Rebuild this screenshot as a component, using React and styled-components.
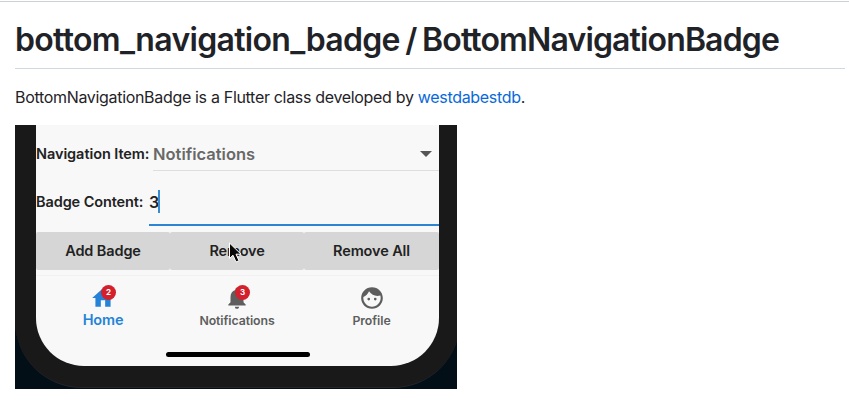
import React from "react";
import styled, { createGlobalStyle } from "styled-components";
import { MdFace, MdHome, MdNotifications } from "react-icons/md";

const GlobalStyle = createGlobalStyle`
  * { box-sizing: border-box; }
  body {
    margin: 0;
    background: #fff;
    color: #1f2328;
    font-family: Inter, "Liberation Sans", sans-serif;
  }
`;

const Page = styled.main`
  height: 413px;
  overflow: hidden;
  margin-top: 1px;
  border-top: 1px solid #cdd1d6;
  padding: 14px 4px 0 15px;
`;

const Title = styled.h1`
  margin: 0;
  height: 53px;
  padding-top: 4px;
  border-bottom: 1px solid #d1d9e0;
  font-size: 32px;
  line-height: 40px;
  font-weight: 600;
  letter-spacing: -0.68px;
  word-spacing: -2px;
  white-space: nowrap;
`;

const ClassName = styled.span`
  letter-spacing: -0.86px;
`;

const Intro = styled.p`
  margin: 16px 0 0;
  height: 40px;
  font-size: 16px;
  line-height: 24px;
  letter-spacing: -0.32px;
  white-space: nowrap;
`;

const Link = styled.a`
  color: #0969da;
  text-decoration: none;
`;

const Preview = styled.section`
  width: 442px;
  height: 264px;
  overflow: hidden;
  background: #020f17;
`;

const Device = styled.div`
  width: 445px;
  height: 263px;
  padding: 0 21px;
  background: #191919;
  border-bottom: 1px solid #25252b;
  border-radius: 0 0 67px 67px;
`;

const Screen = styled.div`
  display: flex;
  flex-direction: column;
  height: 241px;
  overflow: hidden;
  background: #f8f8f8;
  border-radius: 0 0 48px 48px;
`;

const Text = styled.span`
  color: ${(p) => p.$color || "#222"};
  font-size: ${(p) => p.$size || 15}px;
  font-weight: ${(p) => p.$weight || 600};
  letter-spacing: ${(p) => p.$spacing || 0}px;
  line-height: 20px;
  white-space: nowrap;
`;

const SelectRow = styled.div`
  display: flex;
  height: 46px;
`;

const RowLabel = styled.div`
  width: ${(p) => p.$width}px;
  padding-top: ${(p) => p.$top}px;
`;

const Select = styled.div`
  display: flex;
  flex: 1;
  justify-content: space-between;
  padding: 19px 7px 0 0;
  border-bottom: 1px solid #dedede;
`;

const Caret = styled.svg`
  width: 12px;
  height: 6px;
  margin-top: 7px;
  fill: #555;
`;

const InputRow = styled.div`
  display: flex;
  height: 56px;
`;

const Input = styled.div`
  display: flex;
  flex: 1;
  height: 55px;
  padding-top: 21px;
  border-bottom: 2px solid #2c85d3;
`;

const Caretline = styled.i`
  width: 2px;
  height: 23px;
  margin: -2px 0 0 -1px;
  background: #368bd2;
`;

const Actions = styled.div`
  display: grid;
  grid-template-columns: 134px 134px 135px;
  height: 38px;
  margin-top: 5px;
`;

const Action = styled.button`
  position: relative;
  display: flex;
  align-items: center;
  justify-content: center;
  padding: 0;
  border: 0;
  border-radius: 2px;
  background: #d6d6d6;
  font-family: inherit;
`;

const Pointer = styled.svg`
  position: absolute;
  left: 58px;
  top: 10px;
  width: 15px;
  height: 22px;
`;

const Navigation = styled.nav`
  display: grid;
  grid-template-columns: 134px 134px 135px;
  height: 72px;
  margin-top: 5px;
  border-top: 1px solid #f1f1f1;
`;

const NavItem = styled.div`
  display: flex;
  flex-direction: column;
  align-items: center;
  padding-top: 9px;
  color: ${(p) => (p.$active ? "#2483d7" : "#5e5e5e")};
`;

const IconBox = styled.div`
  position: relative;
  height: ${(p) => (p.$active ? 25 : 26)}px;
  svg { display: block; }
`;

const Badge = styled.b`
  position: absolute;
  left: 11px;
  top: 0;
  width: 15px;
  height: 15px;
  border-radius: 50%;
  background: #d4202d;
  color: #fff;
  font-size: 8px;
  line-height: 15px;
  font-weight: 700;
  text-align: center;
`;

const HomeIndicator = styled.div`
  width: 144px;
  height: 5px;
  margin: 5px 0 0 130px;
  border-radius: 3px;
  background: #000;
`;

const navItems = [
  { label: "Home", Icon: MdHome, count: 2, active: true, size: 14.5, spacing: -0.15 },
  { label: "Notifications", Icon: MdNotifications, count: 3, size: 12.3, spacing: -0.07 },
  { label: "Profile", Icon: MdFace, size: 12.3, spacing: -0.05 },
];

export default function App() {
  return (
    <>
      <GlobalStyle />
      <Page>
        <Title>
          bottom_navigation_badge / <ClassName>BottomNavigationBadge</ClassName>
        </Title>
        <Intro>
          BottomNavigationBadge is a Flutter class developed by <Link>westdabestdb</Link>.
        </Intro>
        <Preview>
          <Device>
            <Screen>
              <SelectRow>
                <RowLabel $width={117} $top={18}>
                  <Text $size={14.5} $spacing={-0.07}>Navigation Item:</Text>
                </RowLabel>
                <Select>
                  <Text $size={16.5} $color="#686868" $spacing={0}>Notifications</Text>
                  <Caret viewBox="0 0 12 6"><path d="M0 0h12L6 6z" /></Caret>
                </Select>
              </SelectRow>
              <InputRow>
                <RowLabel $width={113} $top={20}>
                  <Text $size={14.5} $spacing={-0.1}>Badge Content:</Text>
                </RowLabel>
                <Input>
                  <Text $size={16} $spacing={-0.6}>3</Text>
                  <Caretline />
                </Input>
              </InputRow>
              <Actions>
                <Action><Text $size={14.5} $spacing={-0.12}>Add Badge</Text></Action>
                <Action>
                  <Text $size={14.5} $spacing={-0.2}>Remove</Text>
                  <Pointer viewBox="0 0 15 22">
                    <path
                      d="M1.5 1v15.5l3.5-3.3 3 6.8 3-1.3-3-6.5h5z"
                      fill="#080808"
                      stroke="#fff"
                      strokeWidth="1"
                    />
                  </Pointer>
                </Action>
                <Action><Text $size={14.5} $spacing={-0.12}>Remove All</Text></Action>
              </Actions>
              <Navigation>
                {navItems.map(({ label, Icon, count, active, size, spacing }) => (
                  <NavItem key={label} $active={active}>
                    <IconBox $active={active}>
                      <Icon size={26} />
                      {count && <Badge>{count}</Badge>}
                    </IconBox>
                    <Text $size={size} $spacing={spacing} $color="inherit">{label}</Text>
                  </NavItem>
                ))}
              </Navigation>
              <HomeIndicator />
            </Screen>
          </Device>
        </Preview>
      </Page>
    </>
  );
}
